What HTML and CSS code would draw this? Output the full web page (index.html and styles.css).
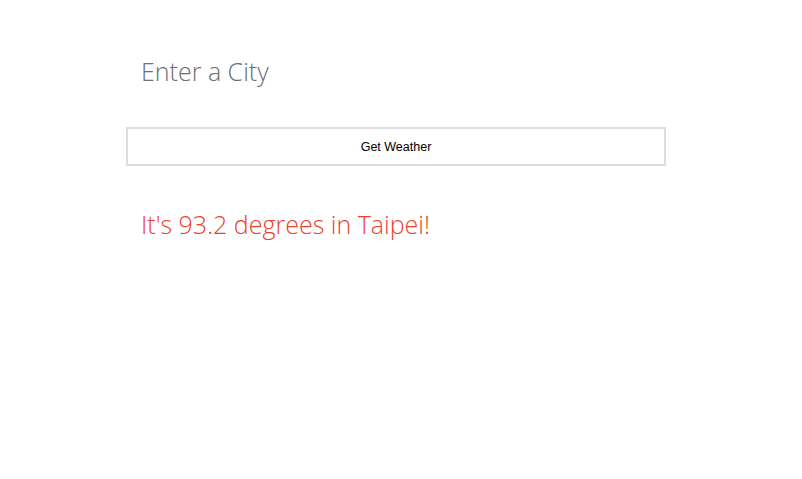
FILE: index.html
```html
<!DOCTYPE html>
<html>
<head>
<meta charset="utf-8">
<link rel="stylesheet" href="styles.css">
</head>
<body>
<div class="app">
  <input class="city" type="text" placeholder="Enter a City">
  <button class="get">Get Weather</button>
  <p class="result">It's 93.2 degrees in Taipei!</p>
</div>
</body>
</html>
```

FILE: styles.css
```css
html, body { margin: 0; padding: 0; background: #fff; }
.app {
  width: 540px;
  margin-left: 126px;
  padding-top: 50px;
  display: flex;
  flex-direction: column;
}
.city {
  box-sizing: border-box;
  width: 540px;
  height: 42px;
  border: none;
  outline: none;
  padding: 0 15px;
  font-family: "Open Sans", sans-serif;
  font-weight: 300;
  font-size: 25px;
  color: #6b6e72;
  background: transparent;
}
.city::placeholder { color: #6b6e72; opacity: 1; }
.get {
  box-sizing: border-box;
  margin-top: 35px;
  width: 540px;
  height: 39px;
  border: 2px solid #ddd;
  background: #fff;
  font-family: "Liberation Sans", Arial, sans-serif;
  font-size: 12.5px;
  color: #000;
  padding: 0;
}
.result {
  margin: 38px 0 0;
  padding-left: 15px;
  font-family: "Open Sans", sans-serif;
  font-weight: 300;
  font-size: 25px;
  line-height: 40px;
  color: #ec412f;
}
```
